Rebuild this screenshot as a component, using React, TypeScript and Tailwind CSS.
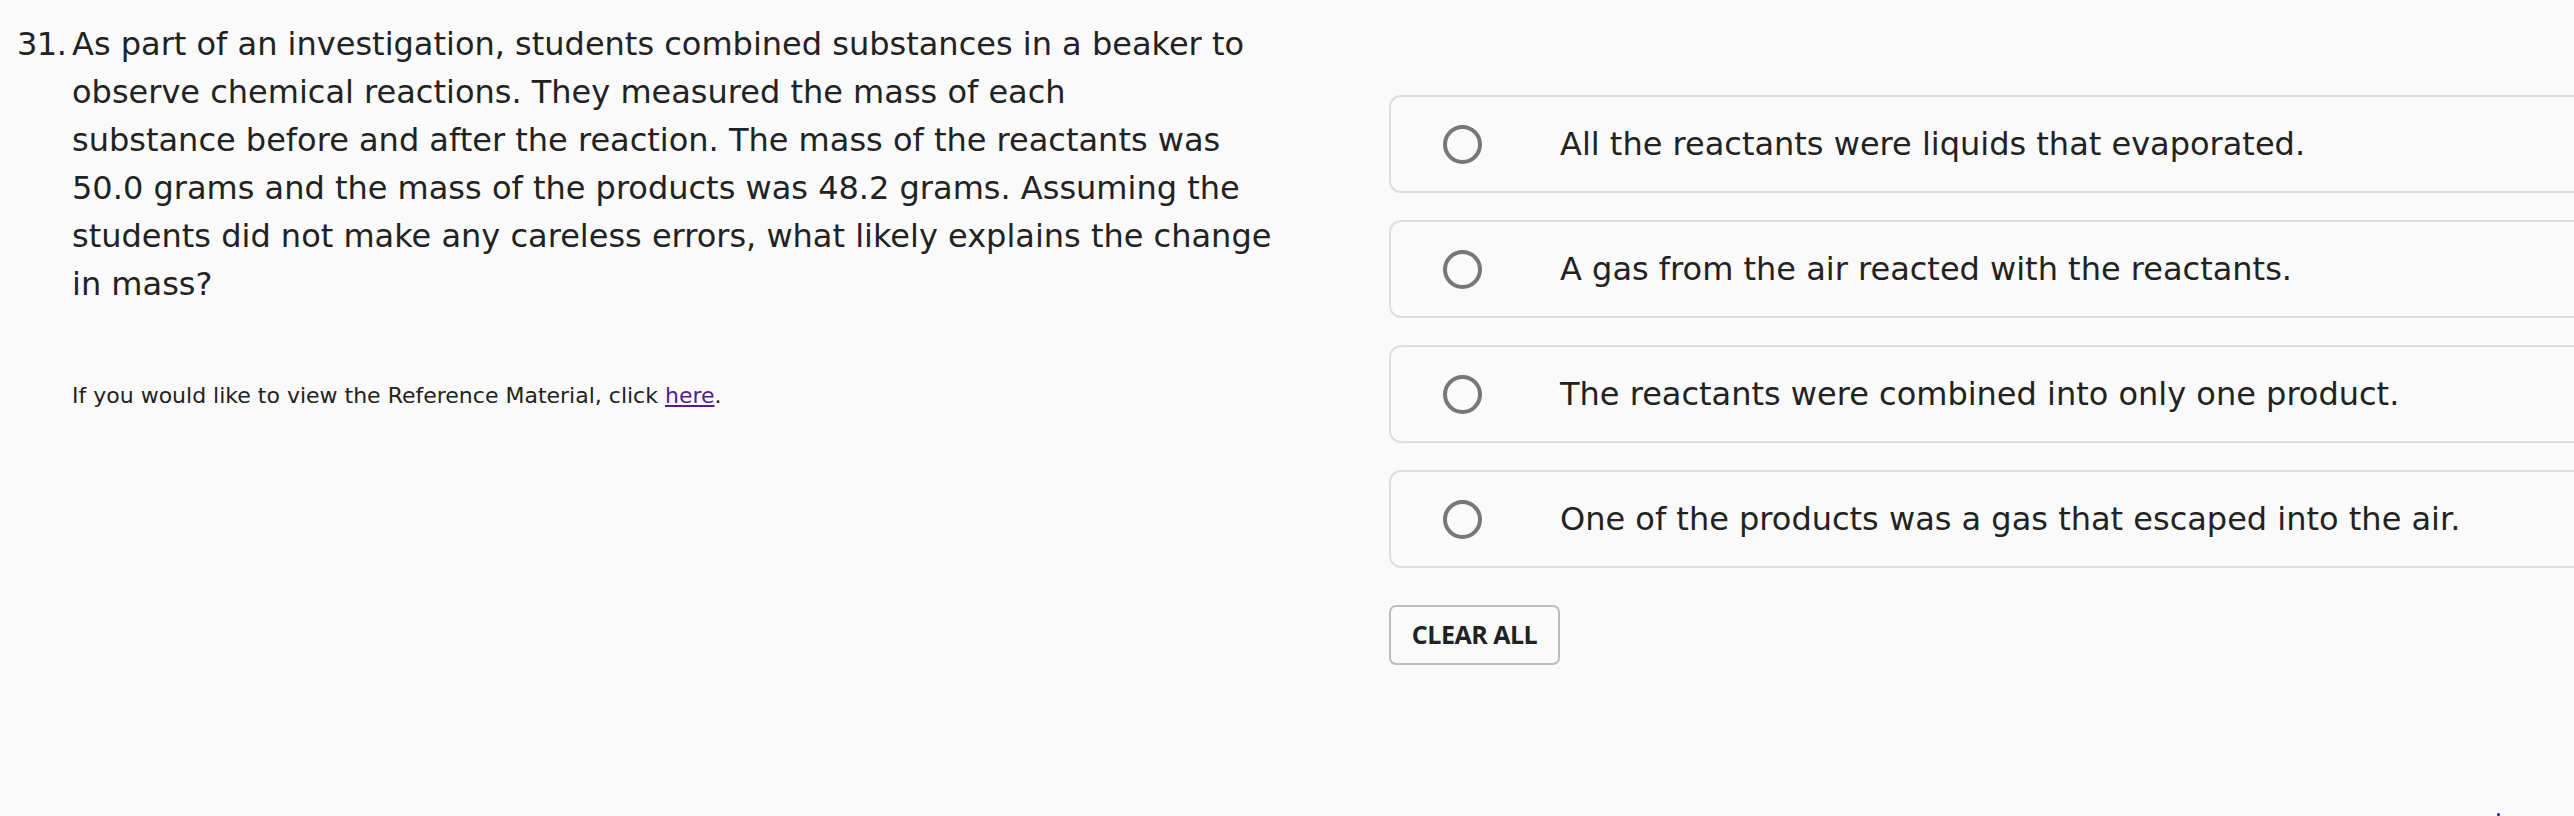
import { useState } from "react"

const choices = [
  "All the reactants were liquids that evaporated.",
  "A gas from the air reacted with the reactants.",
  "The reactants were combined into only one product.",
  "One of the products was a gas that escaped into the air.",
]

const questionLines = [
  "As part of an investigation, students combined substances in a beaker to",
  "observe chemical reactions. They measured the mass of each",
  "substance before and after the reaction. The mass of the reactants was",
  "50.0 grams and the mass of the products was 48.2 grams. Assuming the",
  "students did not make any careless errors, what likely explains the change",
  "in mass?",
]

export default function App() {
  const [selected, setSelected] = useState<number | null>(null)

  return (
    <div className="relative flex h-[816px] w-full overflow-hidden bg-[#fafafa] text-[#222]">
      {/* Question */}
      <div className="w-[1389px] shrink-0 pt-[20px] pl-[17px] font-['DejaVu_Sans',sans-serif]">
        <div className="flex text-[32px] leading-[48px]">
          <span className="w-[55px] shrink-0 tracking-[-0.5px]">31.</span>
          <p>
            {questionLines.map((line, i) => (
              <span key={i}>
                {line}
                {i < questionLines.length - 1 && <br />}
              </span>
            ))}
          </p>
        </div>
        <p className="mt-[73px] pl-[55px] text-[22px] leading-[30px]">
          If you would like to view the Reference Material, click{" "}
          <a href="#" className="text-[#551a8b] underline">
            here
          </a>
          .
        </p>
      </div>

      {/* Answer choices */}
      <div className="-mr-[40px] flex flex-1 flex-col pt-[95px]">
        <div className="flex flex-col gap-[27px]">
          {choices.map((choice, i) => (
            <button
              key={i}
              onClick={() => setSelected(i)}
              className="flex h-[98px] items-center rounded-[12px] border-2 border-[#dedede] bg-[#fafafa] pl-[52px] text-left"
            >
              <span className="flex h-[39px] w-[39px] shrink-0 items-center justify-center rounded-full border-[4px] border-[#777]">
                {selected === i && <span className="h-[19px] w-[19px] rounded-full bg-[#555]" />}
              </span>
              <span className="ml-[78px] font-['DejaVu_Sans',sans-serif] text-[32px] text-[#222]">
                {choice}
              </span>
            </button>
          ))}
        </div>
        <div className="mt-[37px]">
          <button
            onClick={() => setSelected(null)}
            className="h-[60px] w-[171px] rounded-[7px] border-2 border-[#bdbdbd] bg-[#fafafa] font-['Open_Sans',sans-serif] text-[25px] font-bold tracking-[-0.5px] text-[#222]"
          >
            CLEAR ALL
          </button>
        </div>
      </div>

      <span className="absolute bottom-0 left-[2497px] h-[3px] w-[3px] rounded-full bg-[#1a237e]" />
    </div>
  )
}
